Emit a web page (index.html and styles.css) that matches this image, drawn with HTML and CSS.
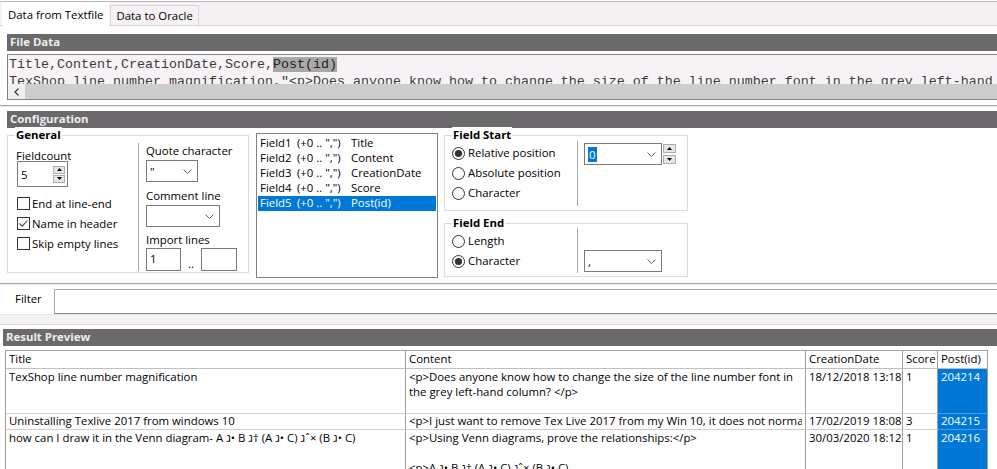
FILE: index.html
```html
<!DOCTYPE html>
<html lang="en">
<head>
<meta charset="utf-8">
<title>Data from Textfile</title>
<link rel="stylesheet" href="styles.css">
</head>
<body>
<div class="tabbar">
  <div class="tab active">Data from Textfile</div>
  <div class="tab">Data to Oracle</div>
</div>
<div class="page">
  <section class="filedata">
    <div class="hdr">File Data</div>
    <div class="textbox">
      <div class="lines">
        <div>Title,Content,CreationDate,Score,<span class="hl">Post(id)</span></div>
        <div>TexShop line number magnification,"&lt;p&gt;Does anyone know how to change the size of the line number font in the grey left-hand column? &lt;/p&gt;",18/12/2018 13:18,1,204214</div>
      </div>
      <div class="hscroll">
        <span class="sarrow"><svg width="5" height="8" viewBox="0 0 5 8"><path d="M4.5 0.5 L1 4 L4.5 7.5" fill="none" stroke="#333" stroke-width="1.2"/></svg></span>
        <span class="thumb"></span>
      </div>
    </div>
  </section>
  <div class="sep"></div>
  <section class="config">
    <div class="hdr">Configuration</div>
    <div class="config-body">
      <div class="group general">
        <div class="gtitle">General</div>
        <div class="ginner">
          <div class="gcol gleft">
            <div class="lbl lbl-fc">Fieldcount</div>
            <div class="spinbox">
              <span class="val">5</span>
              <span class="spin">
                <span class="sbtn"><svg width="5" height="3" viewBox="0 0 5 3"><path d="M0 3 L2.5 0 L5 3Z" fill="#000"/></svg></span>
                <span class="sbtn"><svg width="5" height="3" viewBox="0 0 5 3"><path d="M0 0 L2.5 3 L5 0Z" fill="#000"/></svg></span>
              </span>
            </div>
            <div class="chk first"><span class="box"></span>End at line-end</div>
            <div class="chk"><span class="box"><svg width="11" height="11" viewBox="0 0 11 11"><path d="M1.5 5.5 L4.2 8.2 L9.5 2.5" fill="none" stroke="#444" stroke-width="1.1"/></svg></span>Name in header</div>
            <div class="chk"><span class="box"></span>Skip empty lines</div>
          </div>
          <div class="vsep"></div>
          <div class="gcol gright">
            <div class="lbl l-quote">Quote character</div>
            <div class="combo w52"><span class="val">"</span><svg class="chev" width="9" height="5" viewBox="0 0 9 5"><path d="M0.5 0.5 L4.5 4.5 L8.5 0.5" fill="none" stroke="#606060"/></svg></div>
            <div class="lbl l-comment">Comment line</div>
            <div class="combo w74"><span class="val"></span><svg class="chev" width="9" height="5" viewBox="0 0 9 5"><path d="M0.5 0.5 L4.5 4.5 L8.5 0.5" fill="none" stroke="#606060"/></svg></div>
            <div class="lbl l-import">Import lines</div>
            <div class="range">
              <div class="input w35">1</div>
              <span class="dots">..</span>
              <div class="input w36"></div>
            </div>
          </div>
        </div>
      </div>

      <div class="fieldlist">
        <div class="item"><span class="c1">Field1</span><span class="c2">(+0 .. ",")</span><span>Title</span></div>
        <div class="item"><span class="c1">Field2</span><span class="c2">(+0 .. ",")</span><span>Content</span></div>
        <div class="item"><span class="c1">Field3</span><span class="c2">(+0 .. ",")</span><span>CreationDate</span></div>
        <div class="item"><span class="c1">Field4</span><span class="c2">(+0 .. ",")</span><span>Score</span></div>
        <div class="item sel"><span class="c1">Field5</span><span class="c2">(+0 .. ",")</span><span>Post(id)</span></div>
      </div>

      <div class="rightcol">
        <div class="group fstart">
          <div class="gtitle">Field Start</div>
          <div class="finner">
            <div class="radios">
              <div class="radio"><svg width="13" height="13" viewBox="0 0 13 13"><circle cx="6.5" cy="6.5" r="6" fill="#fff" stroke="#333"/><circle cx="6.5" cy="6.5" r="3.6" fill="#333"/></svg>Relative position</div>
              <div class="radio"><svg width="13" height="13" viewBox="0 0 13 13"><circle cx="6.5" cy="6.5" r="6" fill="#fff" stroke="#333"/></svg>Absolute position</div>
              <div class="radio"><svg width="13" height="13" viewBox="0 0 13 13"><circle cx="6.5" cy="6.5" r="6" fill="#fff" stroke="#333"/></svg>Character</div>
            </div>
            <div class="vsep vs-start"></div>
            <div class="combo w78 c-start"><span class="val"><span class="selval">0</span></span><svg class="chev" width="9" height="5" viewBox="0 0 9 5"><path d="M0.5 0.5 L4.5 4.5 L8.5 0.5" fill="none" stroke="#606060"/></svg></div>
            <span class="spin spin-side">
              <span class="sbtn"><svg width="5" height="3" viewBox="0 0 5 3"><path d="M0 3 L2.5 0 L5 3Z" fill="#000"/></svg></span>
              <span class="sbtn"><svg width="5" height="3" viewBox="0 0 5 3"><path d="M0 0 L2.5 3 L5 0Z" fill="#000"/></svg></span>
            </span>
          </div>
        </div>
        <div class="group fend">
          <div class="gtitle">Field End</div>
          <div class="finner">
            <div class="radios">
              <div class="radio"><svg width="13" height="13" viewBox="0 0 13 13"><circle cx="6.5" cy="6.5" r="6" fill="#fff" stroke="#333"/></svg>Length</div>
              <div class="radio"><svg width="13" height="13" viewBox="0 0 13 13"><circle cx="6.5" cy="6.5" r="6" fill="#fff" stroke="#333"/><circle cx="6.5" cy="6.5" r="3.6" fill="#333"/></svg>Character</div>
            </div>
            <div class="vsep vs-end"></div>
            <div class="combo w78 c-end"><span class="val">,</span><svg class="chev" width="9" height="5" viewBox="0 0 9 5"><path d="M0.5 0.5 L4.5 4.5 L8.5 0.5" fill="none" stroke="#606060"/></svg></div>
          </div>
        </div>
      </div>
    </div>
  </section>
  <div class="sep"></div>
  <div class="filter"><span class="flbl">Filter</span><div class="finput"></div></div>
  <div class="splitter"></div>
  <section class="result">
    <div class="hdr">Result Preview</div>
    <div class="grid" role="table">
      <div class="cell h"><div class="clip">Title</div></div>
      <div class="cell h"><div class="clip">Content</div></div>
      <div class="cell h"><div class="clip">CreationDate</div></div>
      <div class="cell h"><div class="clip">Score</div></div>
      <div class="cell h"><div class="clip">Post(id)</div></div>

      <div class="cell r1"><div class="clip">TexShop line number magnification</div></div>
      <div class="cell r1 wide"><div class="clip">&lt;p&gt;Does anyone know how to change the size of the line number font in<br>the grey left-hand column? &lt;/p&gt;</div></div>
      <div class="cell r1"><div class="clip">18/12/2018 13:18</div></div>
      <div class="cell r1"><div class="clip">1</div></div>
      <div class="cell r1 pid"><div class="clip">204214</div></div>

      <div class="cell r2"><div class="clip">Uninstalling Texlive 2017 from windows 10</div></div>
      <div class="cell r2 wide"><div class="clip">&lt;p&gt;I just want to remove Tex Live 2017 from my Win 10, it does not normally uninstall</div></div>
      <div class="cell r2"><div class="clip">17/02/2019 18:08</div></div>
      <div class="cell r2"><div class="clip">3</div></div>
      <div class="cell r2 pid"><div class="clip">204215</div></div>

      <div class="cell r3"><div class="clip">how can I draw it in the Venn diagram- A ג• B ג† (A ג• C) גˆ× (B ג• C)</div></div>
      <div class="cell r3 wide"><div class="clip">&lt;p&gt;Using Venn diagrams, prove the relationships:&lt;/p&gt;<br><br>&lt;p&gt;A ג• B ג† (A ג• C) גˆ× (B ג• C)</div></div>
      <div class="cell r3"><div class="clip">30/03/2020 18:12</div></div>
      <div class="cell r3"><div class="clip">1</div></div>
      <div class="cell r3 pid"><div class="clip">204216</div></div>
    </div>
  </section>
</div>
</body>
</html>
```

FILE: styles.css
```css
* { box-sizing: border-box; }
html, body { margin: 0; padding: 0; }
body {
  width: 997px;
  height: 469px;
  overflow: hidden;
  background: #ffffff;
  font-family: "Open Sans", "Noto Sans", sans-serif;
  font-size: 11.4px;
  color: #000;
}

/* tabs */
.tabbar {
  margin-top: 1px;
  height: 25px;
  border-top: 1px solid #b9b5b9;
  border-bottom: 1px solid #d6d2d6;
  background: #f5f1f5;
  display: flex;
  align-items: flex-end;
  padding-left: 2px;
}
.tab {
  height: 20px;
  padding: 2px 5px 0;
  line-height: 15px;
  border: 1px solid #dad6da;
  border-bottom: none;
  margin-left: 1px;
  white-space: nowrap;
}
.tab.active {
  height: 24px;
  padding-top: 4px;
  background: #fff;
  border-color: #fff;
  margin-left: 0;
  margin-bottom: -1px;
}

/* section header */
.hdr {
  height: 17px;
  background: #6b696b;
  color: #eeeeee;
  font-weight: bold;
  line-height: 16px;
  padding-left: 3px;
  white-space: nowrap;
}

/* file data */
.filedata { padding: 8px 0 0 7px; }
.textbox {
  margin-top: 3px;
  height: 46px;
  border: 1px solid #838383;
  border-right: none;
  background: #f6f2f6;
  display: flex;
  flex-direction: column;
  overflow: hidden;
}
.lines {
  height: 29px;
  overflow: hidden;
  padding: 1px 0 0 1px;
  font-family: "Liberation Mono", monospace;
  font-size: 13.33px;
  line-height: 17px;
  white-space: nowrap;
  color: #3a3a3a;
}
.hl { background: #a8a8a8; color: #222; }
.hscroll {
  height: 15px;
  display: flex;
  background: #f0f0f0;
}
.sarrow {
  width: 17px;
  display: flex;
  align-items: center;
  justify-content: center;
}
.thumb { flex: 1; background: #cdcdcd; }

.sep {
  height: 2px;
  margin-top: 5px;
  border-top: 1px solid #a5a5a5;
  border-bottom: 1px solid #ececec;
}

/* configuration */
.config { padding: 4px 0 0 7px; }
.config-body {
  height: 150px;
  display: flex;
  align-items: flex-start;
}
.group {
  border: 1px solid #dcdcdc;
  background: #fff;
}
.gtitle {
  margin-top: -9px;
  margin-left: 7px;
  padding: 0 1px;
  width: fit-content;
  background: #fff;
  font-weight: bold;
  line-height: 15px;
  margin-bottom: 1px;
  white-space: nowrap;
}
.general {
  width: 242px;
  margin-top: 7px;
  padding-bottom: 1px;
}
.ginner {
  display: flex;
  padding-left: 8px;
}
.gleft { width: 122px; }
.vsep { width: 1px; background: #a8a8a8; }
.gright { padding-left: 7px; }
.lbl { line-height: 15px; white-space: nowrap; }
.lbl-fc { margin-top: 5px; }
.l-quote { margin-top: 0; }
.l-comment { margin-top: 6px; }
.l-import { margin-top: 5px; }

.spinbox {
  margin-top: -2px;
  margin-left: 1px;
  width: 51px;
  height: 26px;
  border: 1px solid #7a7a7a;
  display: flex;
  align-items: center;
  justify-content: space-between;
  padding: 0 2px 0 3px;
}
.spin {
  display: flex;
  flex-direction: column;
  gap: 1px;
}
.sbtn {
  width: 12px;
  height: 8px;
  border: 1px solid #adadad;
  background: #e5e5e5;
  display: flex;
  align-items: center;
  justify-content: center;
}

.chk {
  height: 20px;
  display: flex;
  align-items: center;
  white-space: nowrap;
}
.chk.first { margin-top: 6px; }
.box {
  width: 13px;
  height: 13px;
  margin: 0 2px 0 1px;
  border: 1px solid #333;
  background: #fff;
  display: flex;
  align-items: center;
  justify-content: center;
}

.combo {
  height: 22px;
  border: 1px solid #7a7a7a;
  background: #fff;
  display: flex;
  align-items: center;
  justify-content: space-between;
  padding: 0 5px 0 3px;
  margin-top: 2px;
}
.w52 { width: 52px; }
.w74 { width: 74px; }
.w78 { width: 78px; }
.chev { flex: none; }

.range {
  display: flex;
  align-items: center;
  margin-top: 1px;
}
.input {
  height: 23px;
  border: 1px solid #7a7a7a;
  background: #fff;
  line-height: 20px;
  padding-left: 3px;
}
.w35 { width: 35px; }
.w36 { width: 36px; }
.dots {
  width: 20px;
  text-align: center;
  padding-top: 7px;
}

/* field list */
.fieldlist {
  width: 182px;
  height: 145px;
  margin: 5px 0 0 7px;
  border: 1px solid #828282;
  padding: 2px 1px 0;
}
.item {
  height: 15px;
  line-height: 14px;
  padding-left: 2px;
  white-space: nowrap;
  display: flex;
}
.item .c1 { width: 37px; }
.item .c2 { width: 54px; }
.item.sel { background: #0078d7; color: #fff; }

/* right column */
.rightcol {
  width: 244px;
  margin-left: 6px;
}
.fstart { margin-top: 7px; padding-bottom: 4px; }
.fend { margin-top: 12px; padding-bottom: 3px; }
.finner {
  display: flex;
  align-items: flex-start;
  padding-left: 7px;
}
.radios { width: 125px; }
.radio {
  height: 20px;
  display: flex;
  align-items: center;
  gap: 3px;
  white-space: nowrap;
  line-height: 14px;
}
.vs-start { margin-top: -2px; height: 65px; }
.vs-end { margin-top: -3px; height: 45px; }
.c-start { margin: 0 0 0 6px; }
.c-end { margin: 19px 0 0 6px; }
.selval {
  background: #0078d7;
  color: #fff;
  padding: 0 1px;
}
.spin-side { margin: 1px 0 0 1px; gap: 2px; }
.spin-side .sbtn { width: 13px; height: 9px; }

/* filter */
.filter {
  margin-top: 4px;
  height: 25px;
  display: flex;
}
.flbl {
  width: 54px;
  flex: none;
  padding: 3px 0 0 15px;
  line-height: 14px;
}
.finput {
  flex: 1;
  border: 1px solid #a8a8a8;
  border-right: none;
  border-bottom-color: #8a8a8a;
  background: #fff;
}
.splitter {
  height: 11px;
  background: #f5f1f5;
  border-top: 1px solid #e6e2e6;
  border-bottom: 1px solid #d8d4d8;
}

/* result */
.result { margin-top: 4px; }
.result .hdr { margin-left: 3px; }
.grid {
  margin: 4px 0 0 5px;
  width: 983px;
  display: grid;
  grid-template-columns: 400px 400px 97px 35px 50px;
  grid-template-rows: 18px 45px 16px 60px;
  border-left: 1px solid #a0a0a0;
  border-top: 1px solid #a0a0a0;
}
.cell {
  border-right: 1px solid #a0a0a0;
  border-bottom: 1px solid #d0d0d0;
  padding: 0 0 0 3px;
  line-height: 15px;
  overflow: hidden;
}
.cell.wide { padding-right: 3px; }
.clip {
  white-space: nowrap;
  overflow: hidden;
}
.cell.h { padding-top: 0; border-bottom-color: #c0c0c0; }
.cell.r1 { padding-top: 0; }
.cell.r2 { padding-top: 0; line-height: 14px; }
.cell.r3 { padding-top: 0; }
.cell.pid {
  background: #0078d7;
  color: #fff;
  border-bottom-color: #4a9be0;
}
```
